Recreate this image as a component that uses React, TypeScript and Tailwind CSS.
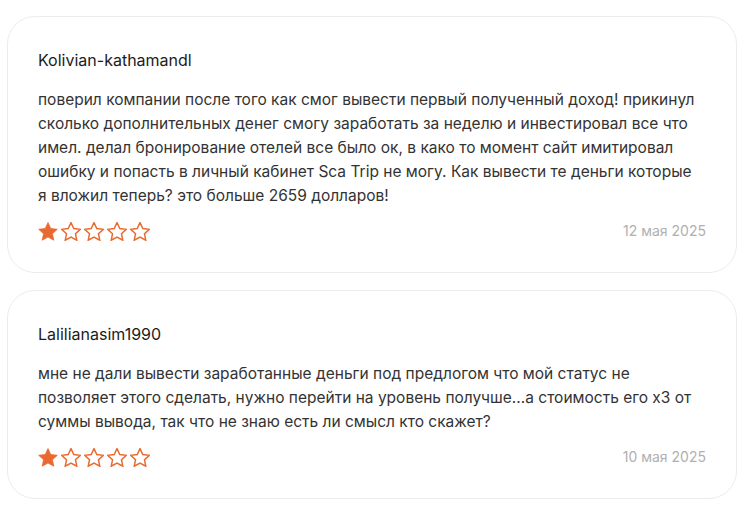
import React from "react"

const reviews = [
    {
        name: "Kolivian-kathamandl",
        text: "поверил компании после того как смог вывести первый полученный доход! прикинул сколько дополнительных денег смогу заработать за неделю и инвестировал все что имел. делал бронирование отелей все было ок, в како то момент сайт имитировал ошибку и попасть в личный кабинет Sca Trip не могу. Как вывести те деньги которые я вложил теперь? это больше 2659 долларов!",
        rating: 1,
        date: "12 мая 2025",
    },
    {
        name: "Lalilianasim1990",
        text: "мне не дали вывести заработанные деньги под предлогом что мой статус не позволяет этого сделать, нужно перейти на уровень получше...а стоимость его х3 от суммы вывода, так что не знаю есть ли смысл кто скажет?",
        rating: 1,
        date: "10 мая 2025",
    },
]

const Star = ({ filled }: { filled: boolean }) => (
    <svg width="20" height="19" viewBox="1.8 2 20.4 19.4" className="shrink-0">
        <path
            d="M12 2.6l2.85 6.1 6.65.75-4.95 4.55 1.35 6.6L12 17.3l-5.9 3.3 1.35-6.6L2.5 9.45l6.65-.75z"
            fill={filled ? "#e96a30" : "none"}
            stroke="#e96a30"
            strokeWidth={filled ? 0.8 : 1.5}
            strokeLinejoin="miter"
        />
    </svg>
)

const ReviewCard = ({ name, text, rating, date }: typeof reviews[number]) => {
    return (
        <div className="w-[730px] rounded-[28px] border border-[#ececec] bg-white pl-[30px] pr-[30px] pt-[31px] pb-[31px]">
            <div className="text-base leading-6 text-[#1c1c1c]">{name}</div>
            <p className="mt-[16px] pr-[3px] text-[15.5px] leading-6 text-[#333333]">{text}</p>
            <div className="mt-[13px] flex items-center justify-between">
                <div className="flex items-center gap-[3px]">
                    {[1, 2, 3, 4, 5].map((i) => (
                        <Star key={i} filled={i <= rating} />
                    ))}
                </div>
                <span className="text-sm text-[#b0b0b0]">{date}</span>
            </div>
        </div>
    )
}

const App = () => {
    return (
        <div className="min-h-[513px] bg-white px-[7px] pt-4 font-['Inter',sans-serif]">
            <div className="flex flex-col gap-[17px]">
                {reviews.map((r) => (
                    <ReviewCard key={r.name} {...r} />
                ))}
            </div>
        </div>
    )
}

export default App
